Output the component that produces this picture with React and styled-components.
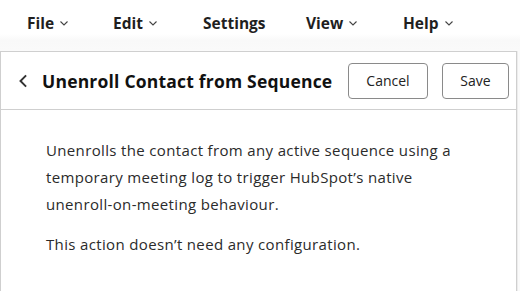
import styled, { createGlobalStyle } from "styled-components";

const Global = createGlobalStyle`
  html, body {
    margin: 0;
    padding: 0;
    background: #fafafa;
    font-family: "Open Sans", "Liberation Sans", sans-serif;
    color: #222;
  }
`;

const Page = styled.div`
  width: 520px;
  height: 291px;
  overflow: hidden;
  display: flex;
  flex-direction: column;
`;

const MenuBar = styled.nav`
  height: 51px;
  display: flex;
  align-items: flex-start;
  padding: 12px 0 0 27px;
  box-sizing: border-box;
  background: linear-gradient(#fff 0, #fff 34px, #f9f9f9 40px, #fafafa 100%);
`;

const MenuItem = styled.div`
  display: flex;
  align-items: center;
  gap: 5px;
  width: ${(p) => p.$w}px;
  font-size: 15.5px;
  font-weight: 700;
  color: #1f1f1f;
  line-height: 22px;
`;

const Chevron = ({ size = 10, dir = "down", stroke = 1.3, color = "#333" }) => (
  <svg width={size} height={size} viewBox="0 0 10 10" fill="none">
    {dir === "down" ? (
      <path d="M1.5 3.5 L5 7 L8.5 3.5" stroke={color} strokeWidth={stroke} />
    ) : (
      <path d="M6.5 1 L2.5 5 L6.5 9" stroke={color} strokeWidth={stroke} />
    )}
  </svg>
);

const Panel = styled.section`
  flex: 1;
  width: 517px;
  background: #fff;
  border: 1px solid #cfcfcf;
  border-bottom: none;
  box-sizing: border-box;
  box-shadow: 1px 0 0 #ececec;
`;

const Header = styled.div`
  height: 57px;
  display: flex;
  align-items: center;
  padding: 0 7px 0 16px;
  border-bottom: 1px solid #cfcfcf;
`;

const BackButton = styled.button`
  border: none;
  background: none;
  padding: 0;
  margin-right: 11px;
  display: flex;
  align-items: center;
  cursor: pointer;
`;

const Title = styled.h1`
  flex: 1;
  margin: 0;
  font-size: 17.5px;
  font-weight: 700;
  letter-spacing: 0.2px;
  color: #111;
  white-space: nowrap;
`;

const Button = styled.button`
  height: 36px;
  width: ${(p) => p.$w}px;
  margin-left: ${(p) => p.$gap || 0}px;
  border: 1px solid #8a8a8a;
  border-radius: 4px;
  background: #fff;
  font-family: inherit;
  font-size: 14px;
  color: #222;
  cursor: pointer;
`;

const Body = styled.div`
  width: 425px;
  padding: 27px 0 0 45px;
  font-size: 15px;
  line-height: 27px;
  letter-spacing: 0.35px;
  color: #2b2b2b;
`;

const Para = styled.p`
  margin: 0 0 13px;
`;

const menu = [
  { label: "File", w: 86, chev: true },
  { label: "Edit", w: 90, chev: true },
  { label: "Settings", w: 103, chev: false },
  { label: "View", w: 97, chev: true },
  { label: "Help", w: 80, chev: true },
];

export default function App() {
  return (
    <Page>
      <Global />
      <MenuBar>
        {menu.map((m) => (
          <MenuItem key={m.label} $w={m.w}>
            {m.label}
            {m.chev && <Chevron size={10} stroke={1.1} color="#444" />}
          </MenuItem>
        ))}
      </MenuBar>
      <Panel>
        <Header>
          <BackButton aria-label="Back">
            <Chevron dir="left" size={14} stroke={1.4} />
          </BackButton>
          <Title>Unenroll Contact from Sequence</Title>
          <Button $w={80}>Cancel</Button>
          <Button $w={67} $gap={14}>Save</Button>
        </Header>
        <Body>
          <Para>
            Unenrolls the contact from any active sequence using a temporary
            meeting log to trigger HubSpot’s native unenroll-on-meeting
            behaviour.
          </Para>
          <Para>This action doesn’t need any configuration.</Para>
        </Body>
      </Panel>
    </Page>
  );
}
